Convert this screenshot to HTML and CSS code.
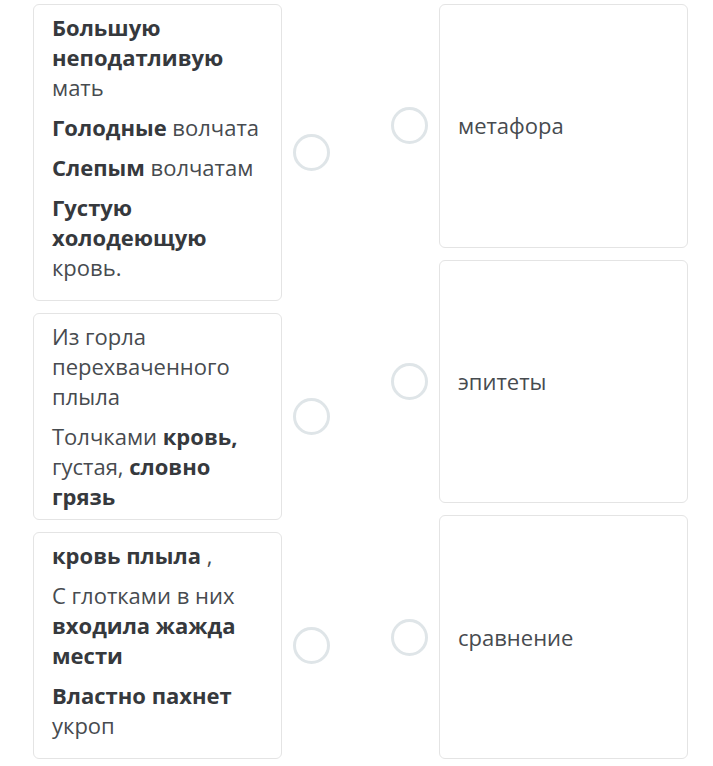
FILE: index.html
```html
<!DOCTYPE html>
<html lang="ru">
<head>
    <meta charset="UTF-8">
    <meta name="viewport" content="width=device-width, initial-scale=1.0">
    <title>Сопоставление</title>
    <link rel="stylesheet" href="styles.css">
</head>
<body>
<div class="match">
    <div class="column left">
        <div class="item">
            <div class="card">
                <p><b>Большую неподатливую</b> мать</p>
                <p><b>Голодные</b> волчата</p>
                <p><b>Слепым</b> волчатам</p>
                <p><b>Густую холодеющую</b> кровь.</p>
            </div>
            <span class="dot"></span>
        </div>
        <div class="item">
            <div class="card tight">
                <p>Из горла перехваченного плыла</p>
                <p>Толчками <b>кровь,</b> густая, <b>словно грязь</b></p>
            </div>
            <span class="dot"></span>
        </div>
        <div class="item">
            <div class="card">
                <p><b>кровь плыла</b> ,</p>
                <p>С глотками в них <b>входила жажда мести</b></p>
                <p><b>Властно пахнет</b> укроп</p>
            </div>
            <span class="dot"></span>
        </div>
    </div>
    <div class="column right">
        <div class="item">
            <span class="dot"></span>
            <div class="card answer"><p>метафора</p></div>
        </div>
        <div class="item">
            <span class="dot"></span>
            <div class="card answer"><p>эпитеты</p></div>
        </div>
        <div class="item">
            <span class="dot"></span>
            <div class="card answer"><p>сравнение</p></div>
        </div>
    </div>
</div>
</body>
</html>
```

FILE: styles.css
```css
body {
    margin: 0;
    background: #fff;
    font-family: "Open Sans", "Noto Sans", sans-serif;
    font-size: 22px;
    line-height: 30px;
    color: #474b4f;
}

.match {
    display: flex;
    justify-content: space-between;
    padding: 4px 25px 0 33px;
}

.column {
    display: flex;
    flex-direction: column;
    gap: 12px;
    height: 755px;
}

.item {
    display: flex;
    align-items: center;
    gap: 11px;
}

.right .item {
    flex: 1;
    align-items: stretch;
}

.card {
    width: 211px;
    padding: 7px 18px 8px;
    border: 1px solid #e4e4e4;
    border-radius: 6px;
    background: #fff;
}

.card p {
    margin: 0 0 10px;
}

.card.tight p:last-child {
    margin-bottom: 0;
}

.card b {
    font-weight: 700;
    color: #36393d;
}

.answer {
    display: flex;
    align-items: center;
}

.answer p {
    margin: 0;
}

.dot {
    width: 31px;
    height: 31px;
    border: 3px solid #dfe5e8;
    border-radius: 50%;
    flex-shrink: 0;
}

.right .dot {
    align-self: center;
}
```
